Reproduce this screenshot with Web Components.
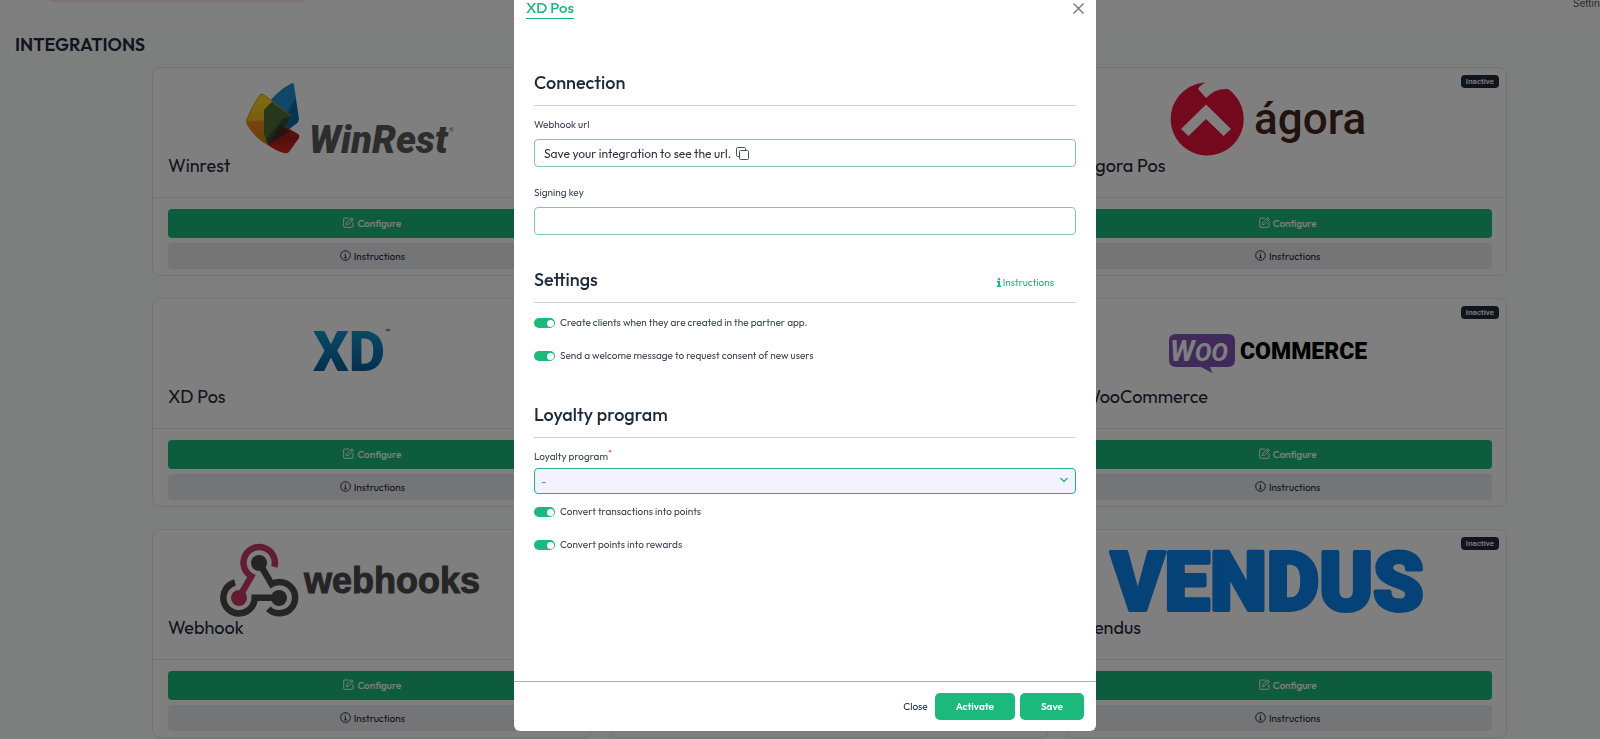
<!DOCTYPE html>
<html lang="en">
<head>
<meta charset="utf-8">
<title>Integrations</title>
<style>
  html, body {
    margin: 0;
    height: 100%;
    overflow: hidden;
  }
  body {
    --green: #1cb97c;
    --ink: #1e293b;
    --line: #e4e9e8;
    font-family: Outfit, Lato, "Liberation Sans", sans-serif;
    font-size: 10px;
    color: var(--ink);
    background: #fafefd;
  }
  .grid {
    display: grid;
    grid-template-columns: repeat(3, 1fr);
    gap: 22px 18px;
    margin: 12px 93px 0 152px;
  }
  svg { overflow: visible; }
</style>
</head>
<body>
<top-bar></top-bar>
<page-title>INTEGRATIONS</page-title>
<div class="grid">
  <integration-card name="Winrest">
    <svg width="210" height="73" viewBox="0 0 210 73" role="img" aria-label="WinRest">
      <defs>
        <linearGradient id="wy" x1="0" y1="0" x2="0" y2="1">
          <stop offset="0" stop-color="#ffd91c"/><stop offset=".5" stop-color="#f0c020"/><stop offset=".56" stop-color="#e88a1c"/><stop offset="1" stop-color="#d87a18"/>
        </linearGradient>
        <linearGradient id="wb" x1="0" y1="0" x2="1" y2="1">
          <stop offset="0" stop-color="#2a86c8"/><stop offset=".55" stop-color="#2090d0"/><stop offset=".6" stop-color="#0868a8"/><stop offset="1" stop-color="#0a70b0"/>
        </linearGradient>
        <linearGradient id="wr" x1="0" y1="0" x2="0" y2="1">
          <stop offset="0" stop-color="#c02820"/><stop offset=".5" stop-color="#a02018"/><stop offset="1" stop-color="#e02820"/>
        </linearGradient>
      </defs>
      <path d="M46 1Q48 1 48 3L53 37Q53 40 50 42L22 63 18 27Q30 9 46 1Z" fill="url(#wb)"/>
      <path d="M14 13Q16 11 18 13L45 34 22 63Q8 55 1 42 0 40 1 37 6 24 14 13Z" fill="url(#wy)" stroke="#d8901c"/>
      <path d="M26 20L45 34 22 63 18 52V28Q21 24 26 20Z" fill="#4c6e38"/>
      <path d="M35 42L52 52Q54 53 53 56L43 70Q41 72 38 71 28 68 22 63Z" fill="url(#wr)"/>
      <path d="M37 37L45 34 40 43 22 63 20 57Z" fill="#33502c"/>
      <path d="M34 43L44 49 22 63Z" fill="#462a24"/>
      <text x="63" y="71" font-family="Roboto" font-weight="900" font-style="italic" font-size="38" fill="#5a5a5a">WinRest</text>
      <text x="203" y="50" font-family="Roboto" font-size="6" fill="#5a5a5a">®</text>
    </svg>
  </integration-card>
  <card-frame></card-frame>
  <integration-card name="Ágora Pos" status="Inactive">
    <svg width="196" height="73" viewBox="0 0 196 73" role="img" aria-label="ágora">
      <path d="M37 .5Q31 3 29 7L37 16Q46 6 59 7A36.500 36.500 0 1 1 37 .5Z" fill="#e8133c"/>
      <path d="M37 22.500L62 47 54.500 54 37 37 19.500 54 12 47Z" fill="#fff"/>
      <text x="85" y="52" font-family="Roboto" font-size="44" font-weight="500" fill="#45281a">ágora</text>
    </svg>
  </integration-card>

  <integration-card name="XD Pos">
    <svg width="76" height="73" viewBox="0 0 76 73" role="img" aria-label="XD">
      <defs>
        <linearGradient id="xd" x1="0" y1="0" x2="0" y2="1">
          <stop offset=".2" stop-color="#1094cc"/><stop offset=".9" stop-color="#085494"/>
        </linearGradient>
      </defs>
      <text x="0" y="58" font-family="Roboto" font-weight="900" font-size="56" fill="url(#xd)">XD</text>
      <text x="72" y="22" font-family="Roboto" font-weight="900" font-size="8" fill="#0e6cae">™</text>
    </svg>
  </integration-card>
  <card-frame></card-frame>
  <integration-card name="WooCommerce" status="Inactive">
    <svg width="196" height="31" viewBox="0 0 196 31" role="img" aria-label="WooCommerce">
      <path d="M7 0H59Q66 0 66 7V26Q66 33 59 33H41L43.500 39 32 33H7Q0 33 0 26V7Q0 0 7 0Z" fill="#7f54b3"/>
      <text x="1" y="27" font-family="Roboto" font-weight="700" font-style="italic" fill="#fff"><tspan font-size="29">W</tspan><tspan font-size="25">OO</tspan></text>
      <text x="71" y="25" font-family="Roboto" font-weight="900" font-size="23" fill="#000">COMMERCE</text>
    </svg>
  </integration-card>

  <integration-card name="Webhook">
    <svg width="262" height="73" viewBox="0 0 262 73" role="img" aria-label="webhooks">
      <g fill="none" stroke="#4a4a4a" stroke-width="6.500">
        <path d="M15 38.500A15.700 15.700 0 1 0 34.700 53.700H59"/>
        <path d="M15 38.500A15.700 15.700 0 1 0 34.700 53.700H59" transform="rotate(240 39.200 42)"/>
        <path d="M15 38.500A15.700 15.700 0 1 0 34.700 53.700H59" transform="rotate(120 39.200 42)" stroke="#c73a63"/>
      </g>
      <circle cx="39" cy="19" r="8" fill="#4a4a4a"/>
      <circle cx="59" cy="54" r="8" fill="#4a4a4a"/>
      <circle cx="19" cy="54" r="8" fill="#c73a63"/>
      <text x="84" y="49" font-family="Liberation Sans" font-weight="700" font-size="36" fill="#4a4a4a" stroke="#4a4a4a">webhooks</text>
    </svg>
  </integration-card>
  <card-frame></card-frame>
  <integration-card name="Vendus" status="Inactive">
    <svg width="313" height="73" viewBox="0 0 313 73" role="img" aria-label="VENDUS">
      <text x="1" y="66" font-family="Roboto" font-weight="900" font-size="81" fill="#0984f0" stroke="#0984f0" stroke-width="4" stroke-linejoin="round">VENDUS</text>
    </svg>
  </integration-card>
</div>

<modal-dialog heading="XD Pos">
  <form-section heading="Connection">
    <copy-field label="Webhook url">Save your integration to see the url.</copy-field>
    <text-field label="Signing key"></text-field>
  </form-section>
  <form-section heading="Settings" link="Instructions">
    <toggle-switch label="Create clients when they are created in the partner app."></toggle-switch>
    <toggle-switch label="Send a welcome message to request consent of new users"></toggle-switch>
  </form-section>
  <form-section heading="Loyalty program">
    <select-field label="Loyalty program"></select-field>
    <toggle-switch label="Convert transactions into points"></toggle-switch>
    <toggle-switch label="Convert points into rewards"></toggle-switch>
  </form-section>
</modal-dialog>

<script>
class TopBar extends HTMLElement {
  constructor() {
    super();
    this.attachShadow({ mode: "open" });
    this.shadowRoot.innerHTML = `
      <style>
        :host {
          display: flex;
          justify-content: space-between;
          height: 23px;
          padding-left: 50px;
          background: white;
          overflow: hidden;
        }
        .notice {
          width: 255px;
          height: 2px;
          background: #fde4e8;
          border-radius: 0 0 4px 4px;
        }
        a {
          width: 27px;
          margin-top: -4px;
          font: 10px/14px Inter, sans-serif;
          color: #55595e;
          text-decoration: none;
        }
      </style>
      <div class="notice"></div>
      <a href="#settings">Settings</a>
    `;
  }
}
customElements.define("top-bar", TopBar);

class PageTitle extends HTMLElement {
  constructor() {
    super();
    this.attachShadow({ mode: "open" });
    this.shadowRoot.innerHTML = `
      <style>
        :host { display: block; padding: 12px 15px 0; }
        h1 { margin: 0; font-size: 18px; line-height: 20px; font-weight: 600; }
      </style>
      <h1><slot></slot></h1>
    `;
  }
}
customElements.define("page-title", PageTitle);

class CardFrame extends HTMLElement {
  constructor() {
    super();
    this.attachShadow({ mode: "open" });
    this.shadowRoot.innerHTML = `
      <style>
        :host {
          display: flex;
          flex-direction: column;
          position: relative;
          box-sizing: border-box;
          min-height: 209px;
          border: 1px solid var(--line);
          border-radius: 8px;
          background: white;
        }
        .body { flex: 1; padding: 14px 14px 18px 15px; }
        .foot {
          display: grid;
          gap: 5px;
          min-height: 60px;
          padding: 11px 14px 6px 15px;
          border-top: 1px solid var(--line);
        }
      </style>
      <div class="body"><slot></slot></div>
      <div class="foot"><slot name="foot"></slot></div>
    `;
  }
}
customElements.define("card-frame", CardFrame);

class IntegrationCard extends HTMLElement {
  constructor() {
    super();
    this.attachShadow({ mode: "open" });
  }

  connectedCallback() {
    const status = this.getAttribute("status");
    this.shadowRoot.innerHTML = `
      <style>
        :host { display: block; }
        .logo {
          display: flex;
          align-items: center;
          justify-content: center;
          height: 73px;
          margin-right: 42px;
        }
        h2 {
          margin: 0;
          font-size: 18px;
          line-height: 22px;
          font-weight: 400;
        }
        .badge {
          position: absolute;
          top: 7px;
          right: 7px;
          padding: 0 5px;
          border-radius: 4px;
          background: var(--ink);
          color: white;
          font: 500 8px/13px Roboto, sans-serif;
        }
        button {
          display: flex;
          align-items: center;
          justify-content: center;
          gap: 3px;
          padding: 0;
          border: 0;
          border-radius: 4px;
          font: inherit;
          cursor: pointer;
        }
        svg { margin-top: -2px; }
        .configure { height: 29px; background: var(--green); color: white; font-weight: 500; }
        .info { height: 26px; background: #e8eaee; color: var(--ink); }
      </style>
      <card-frame>
        <div class="logo"><slot></slot></div>
        <h2>${this.getAttribute("name")}</h2>
        ${status ? `<span class="badge">${status}</span>` : ""}
        <button slot="foot" class="configure">
          <svg width="11" height="11" viewBox="0 0 16 16" fill="none" stroke="currentColor" stroke-width="1.400" aria-hidden="true">
            <path d="M8.500 1.500H2.500Q1 1.500 1 3V13.500Q1 15 2.500 15H13Q14.500 15 14.500 13.500V7.500"/>
            <path d="M5.500 8L12.500 1 15 3.500 8 10.500 5 11Z"/>
            <path d="M11 2.500L13.500 5"/>
          </svg>
          Configure
        </button>
        <button slot="foot" class="info">
          <svg width="11" height="11" viewBox="0 0 16 16" fill="none" stroke="currentColor" stroke-width="1.400" aria-hidden="true">
            <circle cx="8" cy="8" r="7"/>
            <path d="M6.500 7H8V11.500M6 11.500H10M7.500 4.500H8.700"/>
          </svg>
          Instructions
        </button>
      </card-frame>
    `;
  }
}
customElements.define("integration-card", IntegrationCard);

class ModalDialog extends HTMLElement {
  constructor() {
    super();
    this.attachShadow({ mode: "open" });
  }

  connectedCallback() {
    this.shadowRoot.innerHTML = `
      <style>
        :host {
          position: fixed;
          inset: 0;
          display: flex;
          justify-content: center;
          align-items: flex-start;
          padding-left: 10px;
          background: rgba(0, 0, 0, 0.5);
        }
        .modal {
          width: 582px;
          margin-top: -13px;
          border-radius: 6px;
          background: white;
        }
        header {
          display: flex;
          align-items: center;
          justify-content: space-between;
          height: 16px;
          padding: 13px 12px 0;
        }
        h2 {
          margin: 0;
          border-bottom: 1px solid var(--green);
          color: var(--green);
          font-size: 15px;
          line-height: 20px;
          font-weight: 500;
        }
        button {
          padding: 0;
          border: 0;
          background: none;
          font: inherit;
          cursor: pointer;
        }
        .x { display: flex; color: #6c757d; }
        main { min-height: 665px; padding: 56px 20px 0; box-sizing: border-box; }
        footer {
          display: flex;
          align-items: center;
          justify-content: flex-end;
          gap: 5px;
          padding: 11px 12px;
          border-top: 1px solid #82c5aa;
        }
        .close { margin-right: 2px; color: var(--ink); }
        .solid {
          height: 27px;
          padding: 0 21px;
          border-radius: 5px;
          background: var(--green);
          color: white;
          font-weight: 600;
        }
      </style>
      <div class="modal" role="dialog" aria-label="${this.getAttribute("heading")}">
        <header>
          <h2>${this.getAttribute("heading")}</h2>
          <button class="x" aria-label="Dismiss">
            <svg width="11" height="11" viewBox="0 0 11 11" stroke="currentColor" stroke-width="1.300"><path d="M.5 .5L10.500 10.500M10.500 .5L.5 10.500"/></svg>
          </button>
        </header>
        <main><slot></slot></main>
        <footer>
          <button class="close">Close</button>
          <button class="solid">Activate</button>
          <button class="solid">Save</button>
        </footer>
      </div>
    `;
  }
}
customElements.define("modal-dialog", ModalDialog);

class FormSection extends HTMLElement {
  constructor() {
    super();
    this.attachShadow({ mode: "open" });
  }

  connectedCallback() {
    const link = this.getAttribute("link");
    this.shadowRoot.innerHTML = `
      <style>
        :host { display: block; margin-bottom: 34px; }
        .head {
          display: flex;
          align-items: center;
          justify-content: space-between;
          height: 34px;
          padding: 0 22px 2px 0;
          border-bottom: 1px solid #cfd2d6;
          margin-bottom: 12px;
          box-sizing: border-box;
        }
        h3 { margin: 0 0 9px; font-size: 18px; line-height: 24px; font-weight: 500; }
        a {
          display: flex;
          align-items: center;
          gap: 2px;
          margin-bottom: 5px;
          color: var(--green);
          text-decoration: none;
        }
      </style>
      <div class="head">
        <h3>${this.getAttribute("heading")}</h3>
        ${link ? `
        <a href="#instructions">
          <svg width="4" height="9" viewBox="0 0 4 9" fill="currentColor" aria-hidden="true"><circle cx="2" cy="1.200" r="1.200"/><path d="M0 3H3V7.500H4V9H0V7.500H1V4.500H0Z"/></svg>
          ${link}
        </a>` : ""}
      </div>
      <slot></slot>
    `;
  }
}
customElements.define("form-section", FormSection);

const fieldStyles = `
  :host { display: block; }
  label { display: block; line-height: 14px; color: #3a4454; }
  .box {
    display: flex;
    align-items: center;
    gap: 5px;
    width: 100%;
    height: 28px;
    box-sizing: border-box;
    border: 1px solid #82c5aa;
    border-radius: 4px;
    padding: 0 9px;
    background: white;
    color: #2c3440;
    font: inherit;
    font-size: 12px;
  }
`;

class CopyField extends HTMLElement {
  constructor() {
    super();
    this.attachShadow({ mode: "open" });
  }

  connectedCallback() {
    this.shadowRoot.innerHTML = `
      <style>
        ${fieldStyles}
        :host { margin-bottom: 19px; }
        label { margin-bottom: 7px; }
        button { display: flex; padding: 0; border: 0; background: none; color: #4a535c; cursor: pointer; }
      </style>
      <label for="url">${this.getAttribute("label")}</label>
      <div class="box">
        <output id="url"><slot></slot></output>
        <button aria-label="Copy">
          <svg width="13" height="13" viewBox="0 0 13 13" fill="none" stroke="currentColor"><rect x="3.500" y="3.500" width="9" height="9" rx="1"/><path d="M3.500 9.500H1.500Q.5 9.500 .5 8.500V1.500Q.5 .5 1.500 .5H8.500Q9.500 .5 9.500 1.500V3.500"/></svg>
        </button>
      </div>
    `;
  }
}
customElements.define("copy-field", CopyField);

class TextField extends HTMLElement {
  constructor() {
    super();
    this.attachShadow({ mode: "open" });
  }

  connectedCallback() {
    this.shadowRoot.innerHTML = `
      <style>
        ${fieldStyles}
        label { margin-bottom: 7px; }
      </style>
      <label for="key">${this.getAttribute("label")}</label>
      <input class="box" id="key" type="text">
    `;
  }
}
customElements.define("text-field", TextField);

class SelectField extends HTMLElement {
  constructor() {
    super();
    this.attachShadow({ mode: "open" });
  }

  connectedCallback() {
    this.shadowRoot.innerHTML = `
      <style>
        ${fieldStyles}
        :host { margin-bottom: 10px; }
        label { margin-bottom: 4px; }
        sup { color: #e8402c; font-size: 8px; line-height: 0; }
        .wrap { position: relative; }
        .box {
          appearance: none;
          height: 26px;
          padding: 0 6px;
          border-color: var(--green);
          background: #f4f2ff;
          color: var(--green);
        }
        svg { position: absolute; right: 8px; top: 9px; color: var(--green); }
      </style>
      <label for="program">${this.getAttribute("label")}<sup>*</sup></label>
      <div class="wrap">
        <select class="box" id="program"><option>-</option></select>
        <svg width="8" height="6" viewBox="0 0 8 6" fill="none" stroke="currentColor" stroke-width="1.300" aria-hidden="true"><path d="M.5 1L4 4.500 7.500 1"/></svg>
      </div>
    `;
  }
}
customElements.define("select-field", SelectField);

class ToggleSwitch extends HTMLElement {
  constructor() {
    super();
    this.attachShadow({ mode: "open" });
  }

  connectedCallback() {
    this.shadowRoot.innerHTML = `
      <style>
        :host { display: block; margin-bottom: 17px; }
        :host(:last-child) { padding-bottom: 6px; margin-bottom: 0; }
        label {
          display: flex;
          align-items: center;
          gap: 5px;
          line-height: 16px;
          color: #3a4454;
        }
        input {
          appearance: none;
          display: flex;
          justify-content: flex-end;
          align-items: center;
          width: 21px;
          height: 10px;
          margin: 0;
          padding: 0 1px;
          border-radius: 5px;
          background: var(--green);
        }
        input::before {
          content: "";
          width: 7px;
          height: 7px;
          border-radius: 50%;
          background: white;
        }
        input:not(:checked) { justify-content: flex-start; background: #ccd2d6; }
      </style>
      <label><input type="checkbox" role="switch" checked>${this.getAttribute("label")}</label>
    `;
  }
}
customElements.define("toggle-switch", ToggleSwitch);
</script>
</body>
</html>
